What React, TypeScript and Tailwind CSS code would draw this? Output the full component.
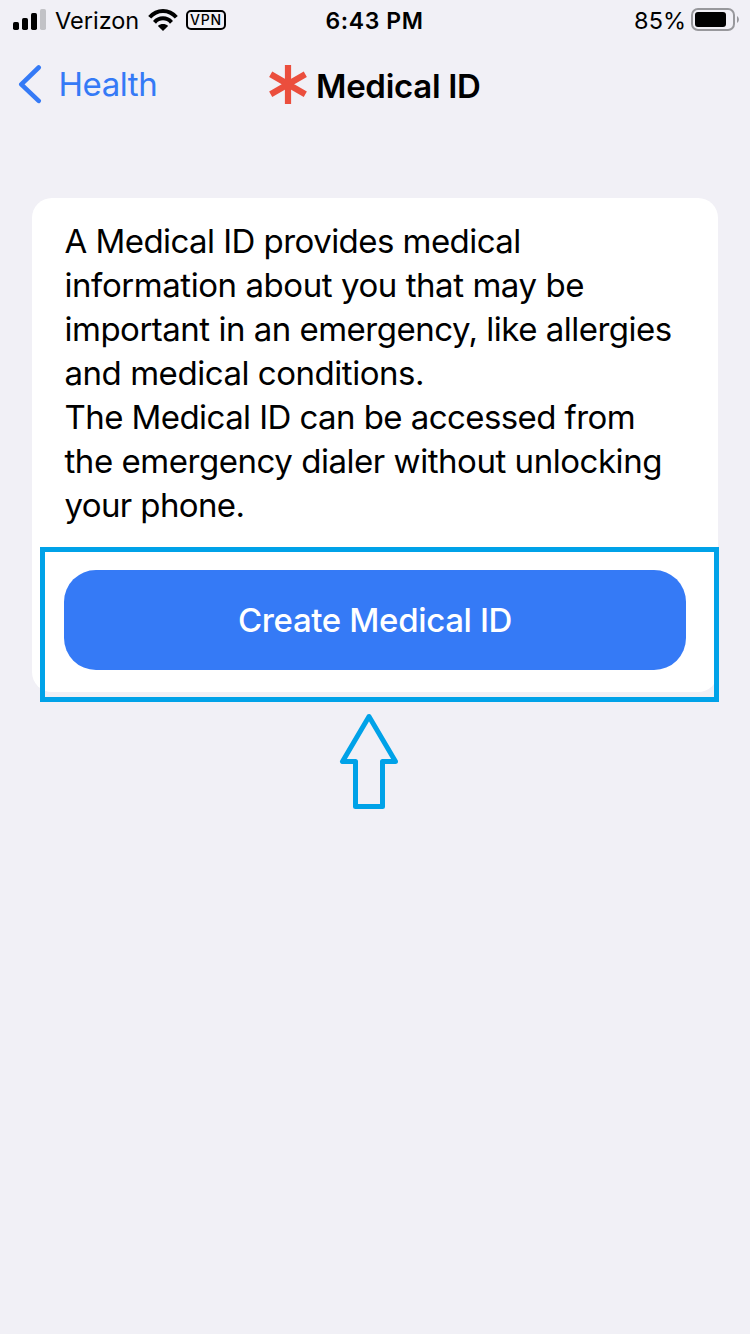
const lines = [
  { text: 'A Medical ID provides medical', spacing: 'tracking-[-0.55px]' },
  { text: 'information about you that may be', spacing: 'tracking-[-0.44px]' },
  { text: 'important in an emergency, like allergies', spacing: 'tracking-[-0.5px]' },
  { text: 'and medical conditions.', spacing: 'tracking-[-0.46px]' },
  { text: 'The Medical ID can be accessed from', spacing: 'tracking-[-0.57px]' },
  { text: 'the emergency dialer without unlocking', spacing: 'tracking-[-0.46px]' },
  { text: 'your phone.', spacing: 'tracking-[-0.62px]' },
];

function Signal() {
  return (
    <svg className="mt-[9px] h-[21px] w-[34px] shrink-0" viewBox="0 0 34 21">
      <rect x="0" y="13" width="6" height="8" rx="1.7" />
      <rect x="9" y="9" width="6" height="12" rx="1.7" />
      <rect x="18" y="4" width="6" height="17" rx="1.7" />
      <rect x="27" y="0" width="6" height="21" rx="1.7" fill="#c2c2c6" />
    </svg>
  );
}

function Wifi() {
  return (
    <svg className="ml-[9px] mt-[9px] h-[22px] w-[30px] shrink-0" viewBox="0 0 30 22" fill="none" stroke="#000" strokeWidth="4">
      <path d="M1.7 8.3C9-.1 21-.1 28.3 8.3" />
      <path d="M6.5 13.3C11.2 8 18.8 8 23.5 13.3" />
      <path d="M15 22L9.9 17C12.7 14.4 17.3 14.4 20.1 17Z" fill="#000" stroke="none" />
    </svg>
  );
}

function Battery() {
  return (
    <svg className="ml-[5px] mt-2 h-6 w-12 shrink-0" viewBox="0 0 48 24">
      <rect x="1" y="1" width="42" height="21" rx="6" fill="none" stroke="#98989c" strokeWidth="2" />
      <rect x="4" y="4" width="31" height="15" rx="3" />
      <path d="M46 8C48.5 9.5 48.5 13.5 46 15Z" fill="#98989c" />
    </svg>
  );
}

export default function App() {
  return (
    <div className="relative flex h-[1334px] w-[750px] flex-col overflow-hidden bg-[#f1f0f6] font-['Inter','Liberation_Sans',sans-serif] text-black">
      <header className="grid h-10 grid-cols-[325px_1fr_auto] pl-[13px] pr-[11px]">
        <div className="flex">
          <Signal />
          <span className="ml-[8px] mt-[5px] w-[84px] whitespace-nowrap text-[23.5px] leading-8">Verizon</span>
          <Wifi />
          <span className="ml-[8px] mt-[10px] flex h-5 w-10 items-center justify-center rounded-[5px] border-2 border-black text-[14px] font-medium leading-4 tracking-[0.8px]">VPN</span>
        </div>
        <span className="-ml-[12.5px] mt-[5px] whitespace-nowrap text-[23px] font-semibold leading-8 tracking-[0.6px]">6:43 PM</span>
        <div className="flex">
          <span className="mt-[5px] text-[23.5px] leading-8">85%</span>
          <Battery />
        </div>
      </header>

      <nav className="flex h-[158px] pt-[24px]">
        <button className="flex w-[268px] shrink-0 items-start pl-[18px] text-[#357af6]">
          <svg className="h-10 w-6" viewBox="0 0 24 40" fill="none" stroke="currentColor" strokeWidth="4.6" strokeLinecap="round" strokeLinejoin="round">
            <path d="M20.7 3.5L3.3 20.3L20.7 36.8" />
          </svg>
          <span className="ml-[16.5px] text-[33px] leading-10 tracking-[-0.45px]">Health</span>
        </button>
        <h1 className="flex items-start text-[33px] font-semibold leading-[44px]">
          <svg className="h-10 w-10" viewBox="0 0 40 40" fill="none" stroke="#eb4e3d" strokeWidth="6.2">
            <path d="M20 1V40M2.7 10.2L37.3 30.3M2.7 30.3L37.3 10.2" />
          </svg>
          <span className="ml-2 whitespace-nowrap tracking-[-0.3px]">Medical ID</span>
        </h1>
      </nav>

      <main className="ml-8 flex h-[494px] w-[686px] flex-col rounded-[20px] bg-white px-8 pt-[21px]">
        <p className="h-[351px] pl-[0.5px] text-[33px] leading-[44px]">
          {lines.map((line) => (
            <span key={line.text} className="block">
              <span className={`whitespace-nowrap ${line.spacing}`}>{line.text}</span>
            </span>
          ))}
        </p>
        <button className="flex h-[100px] items-center justify-center rounded-[32px] bg-[#357af6] pt-[2px] text-[33px] font-medium tracking-[-0.35px] text-white">
          Create Medical ID
        </button>
      </main>

      <div className="pointer-events-none absolute left-10 top-[547px] h-[155px] w-[679px] border-[5px] border-[#00a2e8]" />
      <svg className="pointer-events-none absolute left-[338px] top-[712px] h-[100px] w-[62px]" viewBox="0 0 62 100" fill="none" stroke="#00a2e8" strokeWidth="5" strokeLinejoin="round">
        <path d="M31 4.5L4.5 49.5H17.5V94.5H44.5V49.5H57.5Z" />
      </svg>
    </div>
  );
}
